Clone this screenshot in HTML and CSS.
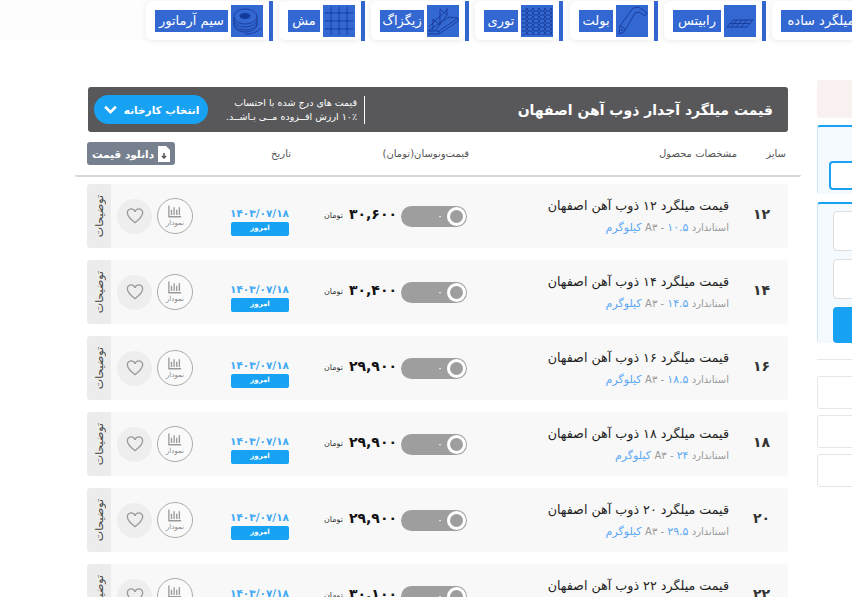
FILE: index.html
```html
<!DOCTYPE html>
<html lang="fa" dir="rtl">

<head>
    <meta charset="UTF-8">
    <title>قیمت میلگرد آجدار ذوب آهن اصفهان</title>
    <link rel="stylesheet" href="styles.css">
</head>

<body>
    <!-- Product categories -->
    <nav class="cats">
        <i class="cat-sep"></i>
        <a class="cat cat-plain">
            <svg class="cat-icon" viewBox="0 0 32 32"><path d="M4 20L26 10M6 23L28 13"/></svg>
            <span class="cat-label">میلگرد ساده</span>
        </a>
        <i class="cat-sep"></i>
        <a class="cat cat-rabitz">
            <svg class="cat-icon" viewBox="0 0 32 32"><path d="M3 22l6-7h20l-6 7zM6 18.500h20M7 22l6-7M12 22l6-7M17 22l6-7"/></svg>
            <span class="cat-label">رابیتس</span>
        </a>
        <i class="cat-sep"></i>
        <a class="cat cat-bolt">
            <svg class="cat-icon" viewBox="0 0 32 32"><path d="M3 29l1-8L17 3l6-1 8 6-2 3-6-4-4 1L8 27zM5 21l4 3M4.500 24l3 2"/></svg>
            <span class="cat-label">بولت</span>
        </a>
        <i class="cat-sep"></i>
        <a class="cat cat-hex">
            <svg class="cat-icon" viewBox="0 0 32 32">
                <defs>
                    <pattern id="hex" width="6" height="4" patternUnits="userSpaceOnUse">
                        <path d="M0 0l1.500 2L0 4M6 0L4.500 2 6 4M1.500 2h3"/>
                    </pattern>
                </defs>
                <rect class="hex-fill" x="1" y="3" width="30" height="27"/>
            </svg>
            <span class="cat-label">توری</span>
        </a>
        <i class="cat-sep"></i>
        <a class="cat cat-zigzag">
            <svg class="cat-icon" viewBox="0 0 32 32"><path d="M1 26h11l19-13-9-1zM1 29h11v-3M12 29L31 16v-3M6 26V14l7 6V4l7 6 0-7M8 26l12-16M2 22l9-9 9-8"/></svg>
            <span class="cat-label">زیگزاگ</span>
        </a>
        <i class="cat-sep"></i>
        <a class="cat cat-mesh">
            <svg class="cat-icon" viewBox="0 0 32 32"><path d="M2 8h28M2 16h28M2 24h28M8 2v28M16 2v28M24 2v28"/></svg>
            <span class="cat-label">مش</span>
        </a>
        <i class="cat-sep"></i>
        <a class="cat cat-wire">
            <svg class="cat-icon" viewBox="0 0 32 32">
                <ellipse class="coil-hole" cx="14" cy="11" rx="5" ry="2.500"/>
                <path d="M3 12c0-5 5-8 11-8s12 3 12 8v7c0 5-6 8-12 8S3 24 3 19zM3 15c1 5 6 7 11 7s11-2 12-7M3 18c1 5 6 7 11 7s11-2 12-7M3 12c1 5 6 7 11 7s11-2 12-7M14 29c6 0 11-1 16-6"/>
            </svg>
            <span class="cat-label">سیم آرماتور</span>
        </a>
    </nav>

    <div class="content">
        <!-- Side column, cut by the window -->
        <aside class="side">
            <div class="side-alert"></div>
            <div class="side-box side-box-first">
                <div class="side-input side-input-blue"></div>
            </div>
            <div class="side-box side-box-second">
                <div class="side-input"></div>
                <div class="side-input"></div>
                <div class="side-submit"></div>
            </div>
            <hr class="side-line">
            <div class="side-link"></div>
            <div class="side-link"></div>
            <div class="side-link"></div>
        </aside>

        <main class="prices">
            <header class="banner">
                <h1 class="banner-title">قیمت میلگرد آجدار ذوب آهن اصفهان</h1>
                <p class="banner-note">قیمت های درج شده با احتساب<br>۱۰٪ ارزش افــزوده مــی بـاشــد.</p>
                <button class="factory-btn">انتخاب کارخانه
                    <svg viewBox="0 0 14 10"><path d="M2 2.500l5 5 5-5"/></svg>
                </button>
            </header>

            <div class="table-head">
                <span class="th-size">سایز</span>
                <span class="th-spec">مشخصات محصول</span>
                <span class="th-price">قیمت‌ونوسان(تومان)</span>
                <span class="th-date">تاریخ</span>
                <button class="download-btn">
                    <svg viewBox="0 0 12 16"><path class="doc" d="M0 0h8l4 4v12H0z"/><path class="arrow" d="M6 7v5M4 10l2 2 2-2"/></svg>
                    دانلود قیمت
                </button>
            </div>

            <article class="row">
                <div class="size">۱۲</div>
                <div class="info">
                    <h2>قیمت میلگرد ۱۲ ذوب آهن اصفهان</h2>
                    <p>استاندارد A۳ - <span>۱۰.۵ کیلوگرم</span></p>
                </div>
                <div class="toggle"><i></i><span>۰</span></div>
                <div class="price"><b>۳۰,۶۰۰</b><small>تومان</small></div>
                <div class="date"><span>۱۴۰۳/۰۷/۱۸</span><em>امروز</em></div>
                <div class="chart"><svg viewBox="0 0 16 14"><path d="M1 0v13h14M4 5v6M7 2v9M10 5v6M13 2v9"/></svg><small>نمودار</small></div>
                <div class="fav"><svg viewBox="0 0 20 18"><path d="M10 16.500C4 12 1.500 9.500 1.500 6A4.300 4.300 0 0 1 10 4.500 4.300 4.300 0 0 1 18.500 6c0 3.500-2.500 6-8.500 10.500z"/></svg></div>
                <div class="notes"><span>توضیحات</span></div>
            </article>

            <article class="row">
                <div class="size">۱۴</div>
                <div class="info">
                    <h2>قیمت میلگرد ۱۴ ذوب آهن اصفهان</h2>
                    <p>استاندارد A۳ - <span>۱۴.۵ کیلوگرم</span></p>
                </div>
                <div class="toggle"><i></i><span>۰</span></div>
                <div class="price"><b>۳۰,۴۰۰</b><small>تومان</small></div>
                <div class="date"><span>۱۴۰۳/۰۷/۱۸</span><em>امروز</em></div>
                <div class="chart"><svg viewBox="0 0 16 14"><path d="M1 0v13h14M4 5v6M7 2v9M10 5v6M13 2v9"/></svg><small>نمودار</small></div>
                <div class="fav"><svg viewBox="0 0 20 18"><path d="M10 16.500C4 12 1.500 9.500 1.500 6A4.300 4.300 0 0 1 10 4.500 4.300 4.300 0 0 1 18.500 6c0 3.500-2.500 6-8.500 10.500z"/></svg></div>
                <div class="notes"><span>توضیحات</span></div>
            </article>

            <article class="row">
                <div class="size">۱۶</div>
                <div class="info">
                    <h2>قیمت میلگرد ۱۶ ذوب آهن اصفهان</h2>
                    <p>استاندارد A۳ - <span>۱۸.۵ کیلوگرم</span></p>
                </div>
                <div class="toggle"><i></i><span>۰</span></div>
                <div class="price"><b>۲۹,۹۰۰</b><small>تومان</small></div>
                <div class="date"><span>۱۴۰۳/۰۷/۱۸</span><em>امروز</em></div>
                <div class="chart"><svg viewBox="0 0 16 14"><path d="M1 0v13h14M4 5v6M7 2v9M10 5v6M13 2v9"/></svg><small>نمودار</small></div>
                <div class="fav"><svg viewBox="0 0 20 18"><path d="M10 16.500C4 12 1.500 9.500 1.500 6A4.300 4.300 0 0 1 10 4.500 4.300 4.300 0 0 1 18.500 6c0 3.500-2.500 6-8.500 10.500z"/></svg></div>
                <div class="notes"><span>توضیحات</span></div>
            </article>

            <article class="row">
                <div class="size">۱۸</div>
                <div class="info">
                    <h2>قیمت میلگرد ۱۸ ذوب آهن اصفهان</h2>
                    <p>استاندارد A۳ - <span>۲۴ کیلوگرم</span></p>
                </div>
                <div class="toggle"><i></i><span>۰</span></div>
                <div class="price"><b>۲۹,۹۰۰</b><small>تومان</small></div>
                <div class="date"><span>۱۴۰۳/۰۷/۱۸</span><em>امروز</em></div>
                <div class="chart"><svg viewBox="0 0 16 14"><path d="M1 0v13h14M4 5v6M7 2v9M10 5v6M13 2v9"/></svg><small>نمودار</small></div>
                <div class="fav"><svg viewBox="0 0 20 18"><path d="M10 16.500C4 12 1.500 9.500 1.500 6A4.300 4.300 0 0 1 10 4.500 4.300 4.300 0 0 1 18.500 6c0 3.500-2.500 6-8.500 10.500z"/></svg></div>
                <div class="notes"><span>توضیحات</span></div>
            </article>

            <article class="row">
                <div class="size">۲۰</div>
                <div class="info">
                    <h2>قیمت میلگرد ۲۰ ذوب آهن اصفهان</h2>
                    <p>استاندارد A۳ - <span>۲۹.۵ کیلوگرم</span></p>
                </div>
                <div class="toggle"><i></i><span>۰</span></div>
                <div class="price"><b>۲۹,۹۰۰</b><small>تومان</small></div>
                <div class="date"><span>۱۴۰۳/۰۷/۱۸</span><em>امروز</em></div>
                <div class="chart"><svg viewBox="0 0 16 14"><path d="M1 0v13h14M4 5v6M7 2v9M10 5v6M13 2v9"/></svg><small>نمودار</small></div>
                <div class="fav"><svg viewBox="0 0 20 18"><path d="M10 16.500C4 12 1.500 9.500 1.500 6A4.300 4.300 0 0 1 10 4.500 4.300 4.300 0 0 1 18.500 6c0 3.500-2.500 6-8.500 10.500z"/></svg></div>
                <div class="notes"><span>توضیحات</span></div>
            </article>

            <article class="row">
                <div class="size">۲۲</div>
                <div class="info">
                    <h2>قیمت میلگرد ۲۲ ذوب آهن اصفهان</h2>
                    <p>استاندارد A۳ - <span>۳۵.۵ کیلوگرم</span></p>
                </div>
                <div class="toggle"><i></i><span>۰</span></div>
                <div class="price"><b>۳۰,۱۰۰</b><small>تومان</small></div>
                <div class="date"><span>۱۴۰۳/۰۷/۱۸</span><em>امروز</em></div>
                <div class="chart"><svg viewBox="0 0 16 14"><path d="M1 0v13h14M4 5v6M7 2v9M10 5v6M13 2v9"/></svg><small>نمودار</small></div>
                <div class="fav"><svg viewBox="0 0 20 18"><path d="M10 16.500C4 12 1.500 9.500 1.500 6A4.300 4.300 0 0 1 10 4.500 4.300 4.300 0 0 1 18.500 6c0 3.500-2.500 6-8.500 10.500z"/></svg></div>
                <div class="notes"><span>توضیحات</span></div>
            </article>
        </main>
    </div>
</body>

</html>
```

FILE: styles.css
```css
html,
body {
    margin: 0;
    height: 597px;
    overflow: hidden;
    background: #fff;
    font-family: "DejaVu Sans", sans-serif;
    color: #222;
}

p,
h1,
h2 {
    margin: 0;
    font-weight: normal;
}

/* categories */
.cats {
    display: flex;
    gap: 6px;
    height: 41px;
    margin-right: -54px;
    align-items: flex-start;
    background: #fdfdfd;
}

.cat {
    display: flex;
    align-items: center;
    gap: 3px;
    height: 35px;
    margin: 1px -6px 0 0;
    padding: 2px 6px 2px 9px;
    background: #fff;
    border-radius: 6px;
    box-shadow: 0 1px 6px rgba(0, 0, 0, 0.08);
}

.cat-bolt {
    margin-left: 1px;
}

.cat-sep {
    flex: none;
    width: 4px;
    height: 40px;
    margin-top: 1px;
    background: #3367d1;
}

.cat-icon {
    flex: none;
    width: 32px;
    height: 32px;
    background: #3367d1;
    fill: none;
    stroke: #1a3f9e;
    stroke-width: 1;
}

.hex-fill {
    fill: url(#hex);
    stroke: none;
}

.coil-hole {
    fill: #123a9c;
}

.cat-label {
    height: 22px;
    line-height: 21px;
    background: #3367d1;
    color: #fff;
    font-size: 13px;
    text-align: center;
    white-space: nowrap;
}

.cat-plain .cat-label {
    width: 80px;
}

.cat-rabitz .cat-label {
    width: 48px;
}

.cat-bolt .cat-label,
.cat-hex .cat-label {
    width: 34px;
}

.cat-zigzag .cat-label {
    width: 44px;
}

.cat-mesh .cat-label {
    width: 32px;
}

.cat-wire .cat-label {
    width: 73px;
}

/* page columns */
.content {
    display: flex;
    align-items: flex-start;
    gap: 16px;
    margin: 39px -225px 0 0;
}

.side {
    flex: none;
    width: 260px;
}

.side-alert {
    height: 38px;
    background: #f9f0f0;
    border-radius: 3px;
}

.side-box {
    box-sizing: border-box;
    background: #f5faff;
    border-top: 2px solid #1ba1f2;
    border-left: 1px solid #cfe6f7;
    border-radius: 3px;
}

.side-box-first {
    height: 69px;
    margin-top: 7px;
    padding: 34px 0 0 11px;
}

.side-box-second {
    height: 141px;
    margin-top: 8px;
    padding: 7px 0 0 15px;
}

.side-input {
    box-sizing: border-box;
    height: 40px;
    margin-bottom: 8px;
    background: #fff;
    border: 1px solid #ddd;
    border-radius: 4px;
}

.side-input-blue {
    height: 29px;
    border: 2px solid #1ba1f2;
}

.side-submit {
    height: 36px;
    background: #17a2f3;
    border-radius: 4px;
}

.side-line {
    height: 1px;
    margin: 16px 0;
    background: #e8e8e8;
    border: 0;
}

.side-link {
    box-sizing: border-box;
    height: 33px;
    margin-bottom: 6px;
    background: #fff;
    border: 1px solid #e6e6e6;
    border-radius: 3px;
}

/* price table */
.prices {
    flex: none;
    box-sizing: border-box;
    width: 726px;
    padding: 7px 13px 0 12px;
}

.banner {
    display: flex;
    align-items: center;
    height: 45px;
    margin-left: 1px;
    padding: 0 15px 0 6px;
    background: #58585a;
    border-radius: 3px;
    color: #fff;
}

.banner-title {
    flex: 1;
    font-size: 14px;
    font-weight: bold;
    white-space: nowrap;
}

.banner-note {
    width: 131px;
    margin-left: 18px;
    padding-right: 7px;
    border-right: 1px solid #fff;
    font-size: 9.500px;
    line-height: 14px;
    white-space: nowrap;
}

.factory-btn {
    display: flex;
    align-items: center;
    justify-content: center;
    gap: 6px;
    flex: none;
    width: 114px;
    height: 29px;
    padding: 0;
    background: #17a2f3;
    border: 0;
    border-radius: 15px;
    color: #fff;
    font: bold 10.500px "DejaVu Sans", sans-serif;
}

.factory-btn svg {
    width: 15px;
    height: 11px;
    fill: none;
    stroke: #fff;
    stroke-width: 2.500;
}

.table-head {
    display: flex;
    align-items: center;
    height: 43px;
    margin: 0 -13px 7px -12px;
    padding: 0 15px 0 12px;
    border-bottom: 2px solid #d8d8d8;
    border-radius: 2px;
    font-size: 10px;
    color: #555;
}

.th-size {
    width: 49px;
}

.th-spec {
    width: 268px;
}

.th-price {
    width: 178px;
}

.download-btn {
    display: flex;
    align-items: center;
    justify-content: center;
    gap: 4px;
    width: 88px;
    height: 23px;
    margin-right: auto;
    padding: 0;
    background: #76808f;
    border: 0;
    border-radius: 3px;
    color: #fff;
    font: bold 10.500px "DejaVu Sans", sans-serif;
    white-space: nowrap;
}

.download-btn svg {
    width: 12px;
    height: 16px;
}

.doc {
    fill: #fff;
}

.arrow {
    fill: none;
    stroke: #555;
    stroke-width: 1.500;
}

.row {
    display: grid;
    grid-template-columns: 59px 262px 66px 112px 58px 38px 36px 5px 35px 6px 24px;
    align-items: center;
    height: 64px;
    margin-bottom: 12px;
    background: #f8f8f8;
    border-radius: 4px;
}

.size {
    padding: 0 0 4px 6px;
    text-align: center;
    font-size: 14px;
    font-weight: bold;
    color: #333;
}

.info {
    padding-bottom: 2px;
}

.info h2 {
    font-size: 12.700px;
    line-height: 18px;
    color: #222;
    white-space: nowrap;
}

.info p {
    margin-top: 6px;
    font-size: 10px;
    color: #999;
    white-space: nowrap;
}

.info p span {
    font-size: 11px;
    color: #5aa7f5;
}

.toggle {
    display: flex;
    align-items: center;
    gap: 4px;
    box-sizing: border-box;
    height: 21px;
    padding-right: 1px;
    background: #9e9e9e;
    border-radius: 11px;
    color: #fff;
    font-size: 11px;
}

.toggle i {
    box-sizing: border-box;
    width: 19px;
    height: 19px;
    border: 3px solid #fff;
    border-radius: 50%;
}

.price {
    display: flex;
    align-items: center;
    gap: 6px;
    padding: 0 4px 4px 0;
}

.price b {
    font-size: 14px;
    color: #111;
}

.price small {
    margin-top: 3px;
    font-size: 8px;
    color: #333;
}

.date {
    grid-column: 5;
    padding-top: 10px;
    text-align: center;
}

.date span {
    display: block;
    font-size: 10.500px;
    font-weight: bold;
    line-height: 13px;
    color: #3fa9f5;
    white-space: nowrap;
}

.date em {
    display: block;
    height: 14px;
    margin-top: 2px;
    background: #17a2f3;
    border-radius: 2px;
    font-size: 7px;
    font-style: normal;
    font-weight: bold;
    line-height: 12px;
    color: #fff;
}

.chart {
    grid-column: 7;
    box-sizing: border-box;
    display: flex;
    flex-direction: column;
    align-items: center;
    justify-content: center;
    height: 36px;
    background: #fafafa;
    border: 1px solid #aaa;
    border-radius: 50%;
}

.chart svg {
    width: 14px;
    height: 13px;
    fill: none;
    stroke: #999;
    stroke-width: 1.500;
}

.chart small {
    font-size: 7px;
    line-height: 10px;
    color: #888;
}

.fav {
    grid-column: 9;
    display: flex;
    align-items: center;
    justify-content: center;
    height: 35px;
    background: #eee;
    border-radius: 50%;
}

.fav svg {
    width: 18px;
    height: 16px;
    fill: none;
    stroke: #999;
    stroke-width: 1.500;
}

.notes {
    grid-column: 11;
    display: flex;
    align-items: center;
    justify-content: center;
    height: 64px;
    background: #ececec;
    border-radius: 4px 0 0 4px;
    font-size: 11px;
    color: #444;
}

.notes span {
    writing-mode: vertical-rl;
    transform: rotate(180deg);
}
```
